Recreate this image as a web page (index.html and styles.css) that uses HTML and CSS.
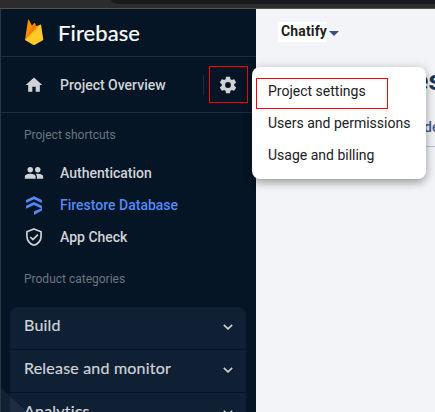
FILE: index.html
```html
<!DOCTYPE html>
<html lang="en">
<head>
<meta charset="utf-8">
<title>Firebase console</title>
<link rel="stylesheet" href="styles.css">
</head>
<body>
<div class="chrome"><div class="tabs"></div></div>
<div class="app">
  <aside class="sidebar">
    <header class="brand">
      <svg class="flame" viewBox="0 0 20 27" width="20" height="27"><path fill="#ff9100" d="M1 21 4 1.2Q4.300 0 5 1L8 6.700 10 4.200Q10.600 3.500 11.200 4.500L12 7 16 6 19 21Z"/><path fill="#f57c00" d="M1 21 9.500 4.500 13 10Z"/><path fill="#ffca28" d="M1 21 16 5.700Q17 5 17.200 6.500L19.300 21 11 25.700Q10 26.200 9 25.700Z"/></svg>
      <span class="brand-name">Firebase</span>
    </header>
    <div class="overview">
      <svg class="icon" viewBox="0 0 24 24"><path d="M10 20v-6h4v6h5v-8h3L12 3 2 12h3v8z"/></svg>
      <span class="nav-text overview-text">Project Overview</span>
      <span class="divider"></span>
      <button class="gear" aria-label="Settings"><svg class="icon" viewBox="0 0 24 24"><path d="M19.430 12.980c.04-.32.07-.64.07-.98s-.03-.66-.07-.98l2.110-1.650c.19-.15.24-.42.12-.64l-2-3.460c-.12-.22-.39-.3-.61-.22l-2.490 1c-.52-.4-1.080-.73-1.690-.98l-.38-2.650C14.460 2.180 14.250 2 14 2h-4c-.25 0-.46.18-.49.42l-.38 2.650c-.61.25-1.170.59-1.690.98l-2.490-1c-.23-.09-.49 0-.61.22l-2 3.460c-.13.22-.07.49.12.64l2.110 1.650c-.04.32-.07.65-.07.98s.03.66.07.98l-2.110 1.650c-.19.15-.24.42-.12.64l2 3.460c.12.22.39.3.61.22l2.490-1c.52.4 1.080.73 1.690.98l.38 2.650c.03.24.24.42.49.42h4c.25 0 .46-.18.49-.42l.38-2.650c.61-.25 1.170-.59 1.690-.98l2.490 1c.23.09.49 0 .61-.22l2-3.460c.12-.22.07-.49-.12-.64zM12 15.500a3.500 3.500 0 1 1 0-7 3.500 3.500 0 0 1 0 7z"/></svg></button>
    </div>
    <div class="label shortcuts-label"><span>Project shortcuts</span></div>
    <nav class="shortcuts">
      <a class="nav-row"><svg class="icon" viewBox="0 0 24 24"><circle cx="7.500" cy="8" r="3.300"/><circle cx="16.500" cy="8" r="3.300"/><path d="M1 19v-2.500C1 14 5 13 7.500 13s6.500 1 6.500 3.500V19zM15.500 19v-2.500c0-1.400-.6-2.500-1.500-3.300.8-.1 1.700-.2 2.500-.2 2.500 0 6.500 1 6.500 3.500V19z"/></svg><span class="nav-text">Authentication</span></a>
      <a class="nav-row active"><svg class="icon" viewBox="0 0 24 24"><path d="M12 1.500 21.500 6v3.500L12 5 2.500 9.500V6zM12 8.500l9.500 4.500v3.500L12 12l-9.500 4.500V13zM12 19.500l9.500-3.500v2.500L12 24z"/></svg><span class="nav-text">Firestore Database</span></a>
      <a class="nav-row"><svg class="icon outline" viewBox="0 0 24 24"><path d="M12 2.300 20.500 5.700v5.300c0 5-3.600 9.600-8.500 10.900-4.900-1.300-8.500-5.900-8.500-10.900V5.700zM7.500 12l3.200 3.200 6-6"/></svg><span class="nav-text">App Check</span></a>
    </nav>
    <div class="label categories-label"><span>Product categories</span></div>
    <div class="categories">
      <div class="category"><span>Build</span><svg class="chevron" viewBox="0 0 10 6"><path d="m.8.8 4.200 4 4.200-4"/></svg></div>
      <div class="category"><span>Release and monitor</span><svg class="chevron" viewBox="0 0 10 6"><path d="m.8.8 4.200 4 4.200-4"/></svg></div>
      <div class="category"><span>Analytics</span><svg class="chevron" viewBox="0 0 10 6"><path d="m.8.8 4.200 4 4.200-4"/></svg></div>
    </div>
    <div class="facet"></div>
  </aside>
  <main class="content">
    <div class="project"><span class="project-name">Chatify</span><span class="caret"></span></div>
    <div class="page-title"><span>C</span><span>es</span></div>
    <div class="page-tabs">de</div>
  </main>
</div>
<div class="menu">
  <a class="menu-item">Project settings</a>
  <a class="menu-item">Users and permissions</a>
  <a class="menu-item">Usage and billing</a>
  <div class="highlight"></div>
</div>
</body>
</html>
```
FILE: styles.css
```css
* { box-sizing: border-box; }
body { margin: 0; width: 435px; height: 412px; overflow: hidden; position: relative; font-family: Roboto, sans-serif; background: #f3f4f7; }
.chrome { height: 9px; background: #2c2c2c; border-bottom: 1px solid #55534c; }
.tabs { height: 4px; margin-left: 111px; background: #191a1d; border-bottom-left-radius: 8px 4px; }
.app { display: flex; height: 403px; }
.sidebar { position: relative; width: 256px; height: 403px; overflow: hidden; background: #051525; border-left: 1px solid #293644; color: #d0d3d6; }
.brand { height: 48px; display: flex; align-items: center; padding: 0 0 1px 23px; border-bottom: 1px solid #1e2d3c; }
.brand-name { margin: 1px 0 0 14px; font: 400 22px/24px Lato, sans-serif; letter-spacing: .1px; color: #fff; -webkit-text-stroke: .2px currentColor; }
.flame { flex: none; }
.overview { height: 56px; display: flex; align-items: center; padding-left: 23px; border-bottom: 1px solid #1e2d3c; }
.icon { width: 20px; height: 20px; fill: currentColor; flex: none; display: block; }
.outline { fill: none; stroke: currentColor; stroke-width: 2; }
.nav-text { margin-left: 16px; font-size: 14px; line-height: 20px; font-weight: 500; white-space: nowrap; }
.overview-text { width: 107px; }
.divider { width: 1px; height: 20px; margin-left: 36px; background: #1e2d3c; }
.gear { width: 39px; height: 37px; margin-left: 5px; padding: 0 1px 0 0; border: 1px solid #f00; background: none; color: inherit; display: flex; align-items: center; justify-content: center; }
.label { padding-left: 23px; font-size: 12px; line-height: 16px; color: #697583; }
.shortcuts-label { padding-top: 14px; }
.shortcuts { padding-top: 14px; }
.nav-row { height: 32px; display: flex; align-items: center; padding-left: 23px; }
.active { color: #5489f8; }
.categories-label { padding-top: 18px; }
.categories { margin: 20px 10px 0 9px; border-radius: 8px 8px 0 0; background: #0f1f34; }
.category { height: 43px; display: flex; align-items: center; justify-content: space-between; padding: 0 13px 5px 14px; border-bottom: 1px solid #051525; font: 400 16px/20px Lato, sans-serif; letter-spacing: .2px; -webkit-text-stroke: .2px currentColor; white-space: nowrap; }
.category span { margin-top: -2px; }
.chevron { width: 10px; height: 6px; fill: none; stroke: currentColor; stroke-width: 1.6; margin-top: 3px; }
.facet { position: absolute; left: 0; bottom: 0; width: 26px; height: 24px; background: rgba(255,255,255,.06); clip-path: polygon(0 0, 100% 100%, 0 100%); }
.content { flex: 1; min-width: 0; }
.project { height: 46px; display: flex; align-items: center; padding-left: 22px; }
.project-name { width: 49px; height: 20px; padding-left: 3px; background: #fff; color: #1f1f21; font: 700 14px/19px Roboto, sans-serif; letter-spacing: .15px; }
.caret { margin: 2px 0 0 2px; border: 5px solid transparent; border-top-color: #395181; border-bottom: 0; }
.page-title { height: 53px; display: flex; padding: 8px 0 0 28px; color: #1b3557; font: 700 28px/36px Roboto, sans-serif; }
.page-title span + span { margin-left: 111px; }
.page-tabs { height: 39px; padding: 9px 0 0 168px; border-bottom: 1px solid #b5c3d9; color: #435b82; font: 500 14px/20px Roboto, sans-serif; }
.menu { position: absolute; left: 252px; top: 67px; width: 174px; height: 112px; padding: 8px 0; border-radius: 8px; background: #fff; box-shadow: 0 4px 8px rgba(0,0,0,.28), 0 1px 12px rgba(0,0,0,.13); }
.menu-item { height: 32px; display: flex; align-items: center; padding-left: 16px; color: #202124; font-size: 14px; line-height: 20px; white-space: nowrap; }
.highlight { position: absolute; left: 4px; top: 11px; width: 132px; height: 31px; border: 1px solid #f00; }
```
